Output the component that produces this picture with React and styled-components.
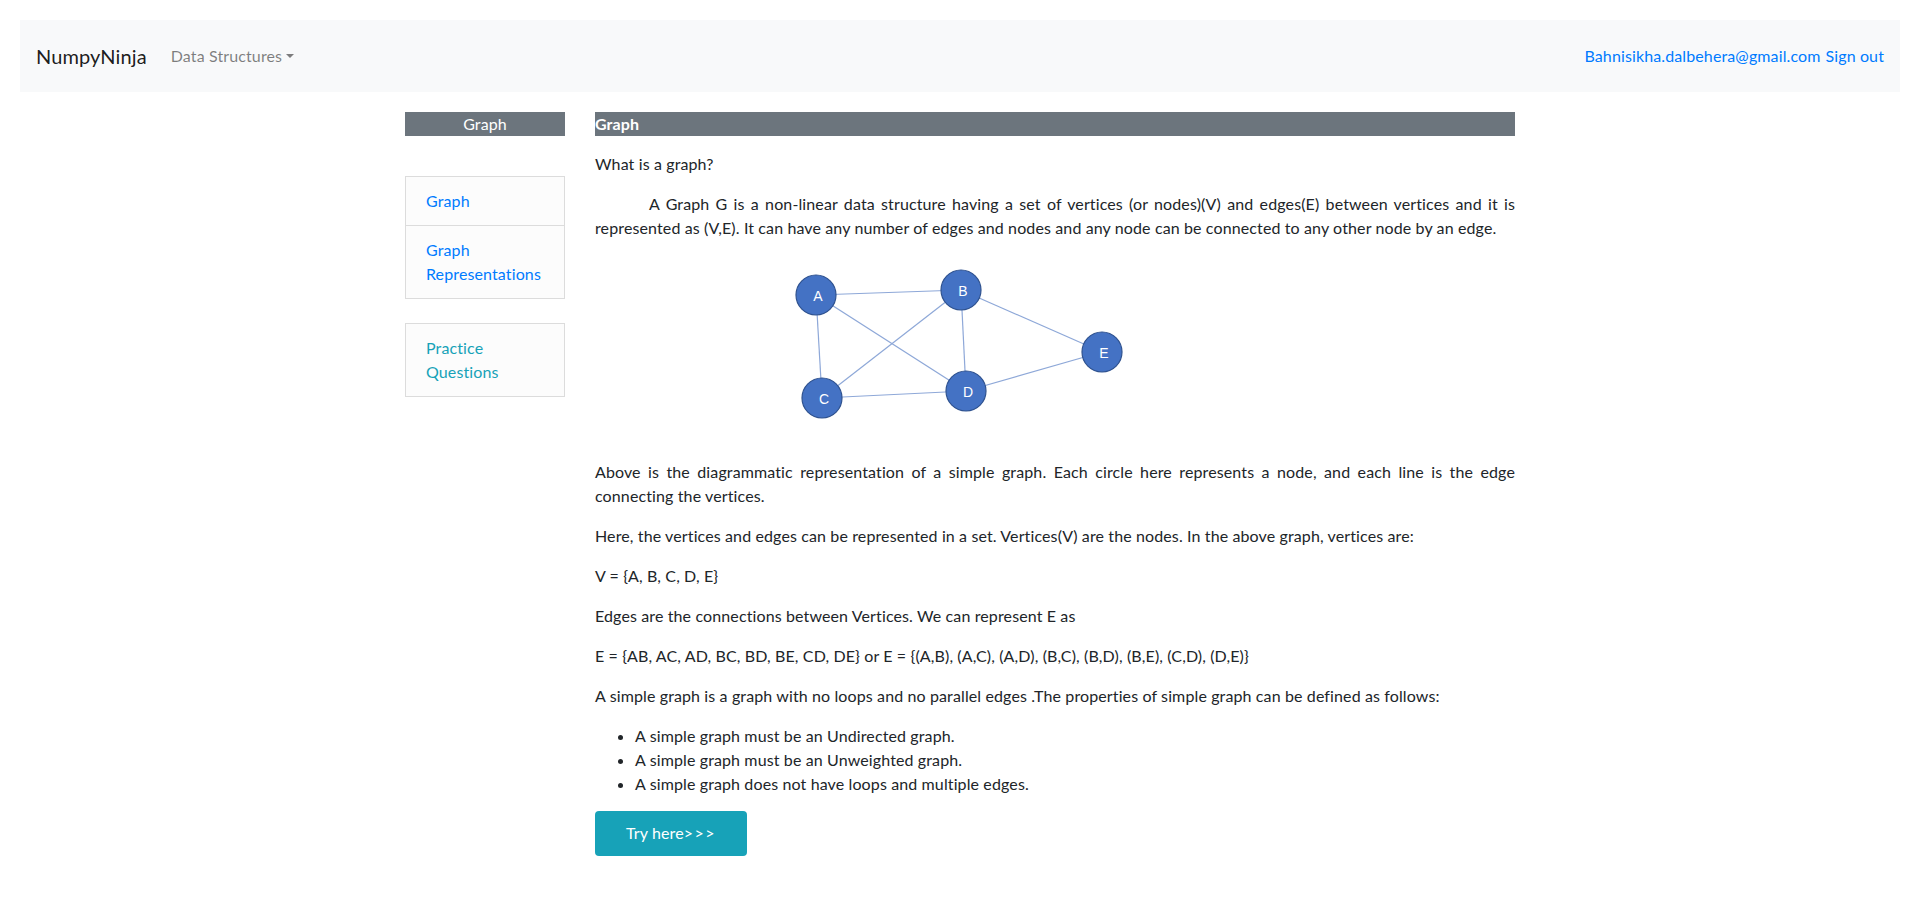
import React from 'react';
import styled, { createGlobalStyle } from 'styled-components';

const GlobalStyle = createGlobalStyle`
  body {
    margin: 0;
    background: #fff;
    color: #212529;
    font-family: Lato, "Noto Sans", "Liberation Sans", sans-serif;
    font-size: 16px;
    line-height: 1.5;
    letter-spacing: 0.12px;
  }
`;

const Page = styled.div`
  padding: 20px;
`;

const Navbar = styled.nav`
  display: flex;
  align-items: center;
  justify-content: space-between;
  background-color: #f8f9fa;
  padding: 16px;
`;

const NavLeft = styled.div`
  display: flex;
  align-items: center;
`;

const Brand = styled.a`
  font-size: 20px;
  line-height: 30px;
  padding: 5px 0;
  margin-right: 16px;
  color: rgba(0, 0, 0, 0.9);
  text-decoration: none;
`;

const DropdownToggle = styled.a`
  padding: 8px;
  color: rgba(0, 0, 0, 0.5);
  text-decoration: none;

  &::after {
    content: '';
    display: inline-block;
    margin-left: 0.255em;
    vertical-align: 0.255em;
    border-top: 0.3em solid;
    border-right: 0.3em solid transparent;
    border-left: 0.3em solid transparent;
  }
`;

const UserLinks = styled.div`
  display: flex;
  gap: 5px;
`;

const NavLink = styled.a`
  color: #007bff;
  text-decoration: none;
`;

const Layout = styled.div`
  display: grid;
  grid-template-columns: 160px 920px;
  column-gap: 30px;
  width: 1110px;
  margin: 20px auto 0;
  align-items: start;
`;

const Sidebar = styled.aside`
  display: flex;
  flex-direction: column;
`;

const SideHeader = styled.div`
  background-color: #6c757d;
  color: #fff;
  text-align: center;
  line-height: 24px;
`;

const ListGroup = styled.div`
  display: flex;
  flex-direction: column;
  margin-top: ${(p) => p.$gap}px;
`;

const ListItem = styled.a`
  display: block;
  padding: 12px 20px;
  background: #fcfcfc;
  border: 1px solid rgba(0, 0, 0, 0.125);
  color: ${(p) => (p.$info ? '#17a2b8' : '#007bff')};
  text-decoration: none;
  line-height: 24px;

  & + & {
    border-top: none;
  }
`;

const Main = styled.main`
  display: flex;
  flex-direction: column;
`;

const TitleBar = styled.div`
  background-color: #6c757d;
  color: #fff;
  font-weight: 700;
  line-height: 24px;
  margin-bottom: 16px;
`;

const Para = styled.p`
  margin: 0 0 16px;
  text-align: ${(p) => (p.$justify ? 'justify' : 'left')};
  text-indent: ${(p) => (p.$indent ? '54px' : '0')};
`;

const Figure = styled.div`
  height: 188px;
  margin: 0 0 16px 185px;
`;

const Bullets = styled.ul`
  margin: 0 0 15px;
  padding-left: 40px;
`;

const TryButton = styled.a`
  align-self: flex-start;
  display: inline-block;
  background-color: #17a2b8;
  color: #fff;
  border-radius: 4px;
  padding: 10px 31px 11px;
  line-height: 24px;
  text-decoration: none;
`;

const Arrows = styled.span`
  letter-spacing: 1.5px;
`;

const nodes = {
  A: [36, 39],
  B: [181, 34],
  C: [42, 142],
  D: [186, 135],
  E: [322, 96],
};

const edges = ['AB', 'AC', 'AD', 'BC', 'BD', 'BE', 'CD', 'DE'];

const GraphDiagram = () => (
  <svg width="360" height="188" viewBox="0 0 360 188">
    {edges.map((e) => {
      const [x1, y1] = nodes[e[0]];
      const [x2, y2] = nodes[e[1]];
      return <line key={e} x1={x1} y1={y1} x2={x2} y2={y2} stroke="#8ea8d8" strokeWidth="1.2" />;
    })}
    {Object.entries(nodes).map(([name, [cx, cy]]) => (
      <g key={name}>
        <circle cx={cx} cy={cy} r="20" fill="#4472c4" stroke="#2f528f" strokeWidth="1.2" />
        <text
          x={cx + 2}
          y={cy + 6}
          fill="#fff"
          fontSize="14"
          textAnchor="middle"
          fontFamily="'Liberation Sans', sans-serif"
        >
          {name}
        </text>
      </g>
    ))}
  </svg>
);

export default function App() {
  return (
    <>
      <GlobalStyle />
      <Page>
        <Navbar>
          <NavLeft>
            <Brand href="#">NumpyNinja</Brand>
            <DropdownToggle href="#">Data Structures</DropdownToggle>
          </NavLeft>
          <UserLinks>
            <NavLink href="#">Bahnisikha.dalbehera@gmail.com</NavLink>
            <NavLink href="#">Sign out</NavLink>
          </UserLinks>
        </Navbar>

        <Layout>
          <Sidebar>
            <SideHeader>Graph</SideHeader>
            <ListGroup $gap={40}>
              <ListItem href="#">Graph</ListItem>
              <ListItem href="#">Graph Representations</ListItem>
            </ListGroup>
            <ListGroup $gap={24}>
              <ListItem href="#" $info>Practice Questions</ListItem>
            </ListGroup>
          </Sidebar>

          <Main>
            <TitleBar>Graph</TitleBar>
            <Para>What is a graph?</Para>
            <Para $justify $indent>
              A Graph G is a non-linear data structure having a set of vertices (or nodes)(V) and edges(E) between
              vertices and it is represented as (V,E). It can have any number of edges and nodes and any node can be
              connected to any other node by an edge.
            </Para>
            <Figure>
              <GraphDiagram />
            </Figure>
            <Para $justify>
              Above is the diagrammatic representation of a simple graph. Each circle here represents a node, and each
              line is the edge connecting the vertices.
            </Para>
            <Para>
              Here, the vertices and edges can be represented in a set. Vertices(V) are the nodes. In the above graph,
              vertices are:
            </Para>
            <Para>V = {'{A, B, C, D, E}'}</Para>
            <Para>Edges are the connections between Vertices. We can represent E as</Para>
            <Para>
              E = {'{AB, AC, AD, BC, BD, BE, CD, DE}'} or E = {'{(A,B), (A,C), (A,D), (B,C), (B,D), (B,E), (C,D), (D,E)}'}
            </Para>
            <Para>
              A simple graph is a graph with no loops and no parallel edges .The properties of simple graph can be
              defined as follows:
            </Para>
            <Bullets>
              <li>A simple graph must be an Undirected graph.</li>
              <li>A simple graph must be an Unweighted graph.</li>
              <li>A simple graph does not have loops and multiple edges.</li>
            </Bullets>
            <TryButton href="#">
              Try here<Arrows>&gt;&gt;&gt;</Arrows>
            </TryButton>
          </Main>
        </Layout>
      </Page>
    </>
  );
}
